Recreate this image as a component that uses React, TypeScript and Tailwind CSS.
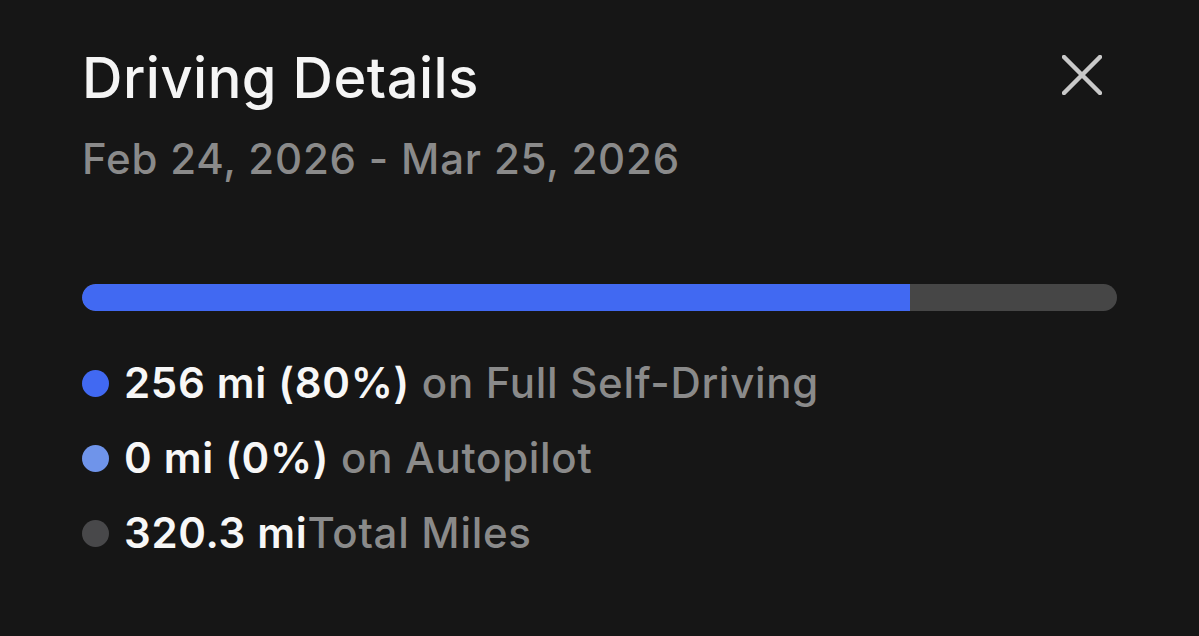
import React from "react";

export default function App() {
  return (
    <div
      className="w-[1199px] h-[636px] bg-[#161616] overflow-hidden relative"
      style={{ fontFamily: "Inter, 'Noto Sans', sans-serif" }}
    >
      <div className="pl-[82px] pr-[82px] pt-[44px] flex flex-col">
        <div className="flex items-start justify-between h-[68px]">
          <h1 className="text-[56px] leading-[68px] font-medium text-[#f5f5f5] tracking-[0.5px] whitespace-nowrap">
            Driving Details
          </h1>
          <button className="mt-[11px] mr-[15px] w-[40px] h-[40px]">
            <svg width="40" height="40" viewBox="0 0 40 40">
              <path
                d="M2 2 L38 38 M38 2 L2 38"
                stroke="#c9c9c9"
                strokeWidth="4.5"
                strokeLinecap="round"
              />
            </svg>
          </button>
        </div>
        <div className="mt-[22px] h-[50px] text-[42px] leading-[50px] font-medium text-[#8a8a8a] tracking-[0.8px] whitespace-nowrap">
          Feb 24, 2026 - Mar 25, 2026
        </div>
        <div className="mt-[100px] h-[27px] w-full rounded-full bg-[#464646] overflow-hidden flex">
          <div className="h-full bg-[#4169f2] rounded-l-full" style={{ width: "80%" }} />
        </div>
        <div className="mt-[47px] flex flex-col gap-[25px]">
          <Row color="bg-[#4169f2]" strong="256 mi (80%)" rest=" on Full Self-Driving" />
          <Row color="bg-[#6f94ea]" strong="0 mi (0%)" rest=" on Autopilot" />
          <Row color="bg-[#48484a]" strong="320.3 mi" rest="Total Miles" />
        </div>
      </div>
    </div>
  );
}

function Row({ color, strong, rest }: { color: string; strong: string; rest: string }) {
  return (
    <div className="flex items-center h-[50px]">
      <span className={`w-[27px] h-[27px] rounded-full ${color} shrink-0`} />
      <span className="ml-[15px] text-[42px] leading-[50px] tracking-[0.7px] whitespace-pre">
        <span className="text-[#f7f7f7] font-semibold">{strong}</span>
        <span className="text-[#8a8a8a] font-medium">{rest}</span>
      </span>
    </div>
  );
}
